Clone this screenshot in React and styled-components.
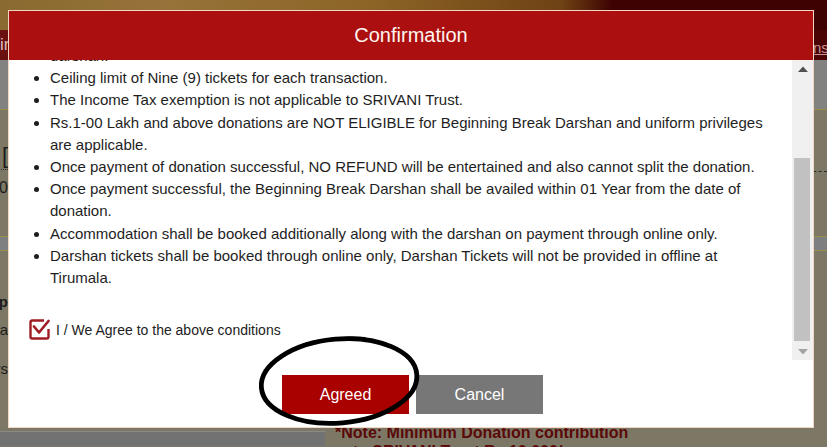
import React, { useLayoutEffect, useRef, useState } from "react";
import styled, { createGlobalStyle } from "styled-components";

const GlobalStyle = createGlobalStyle`
  html, body {
    margin: 0;
    padding: 0;
  }
  body {
    font-family: "Liberation Sans", Arial, sans-serif;
    background: #7d7866;
    overflow: hidden;
  }
`;

const Screen = styled.div`
  position: relative;
  width: 827px;
  height: 447px;
  overflow: hidden;
  display: flex;
  flex-direction: column;
  background: #7d7866;
`;

/* dimmed page behind the dialog */

const Banner = styled.div`
  height: 30px;
  flex-shrink: 0;
  background: linear-gradient(
    90deg,
    #8a6a30 0%,
    #96733a 20%,
    #8c6426 45%,
    #6e4214 68%,
    #3e0202 74%,
    #3e0202 100%
  );
`;

const NavBar = styled.div`
  height: 30px;
  flex-shrink: 0;
  display: flex;
  justify-content: space-between;
  align-items: center;
  background: linear-gradient(90deg, #6a1010 0%, #5a0a0a 60%, #4a0404 100%);
  color: #d8bcbc;
  font-size: 17px;
`;

const NavLink = styled.span`
  width: 14px;
  white-space: nowrap;
  font-size: 15px;
  color: #c89494;
  text-decoration: underline;
  padding-top: 4px;
`;

const SubBar = styled.div`
  height: 49px;
  flex-shrink: 0;
  background: #828280;
  border-bottom: 1px solid #9a8c4a;
`;

const Section = styled.div`
  height: ${(p) => p.$h}px;
  flex-shrink: 0;
  display: flex;
  justify-content: space-between;
  background: #7d7866;
`;

const Band = styled.div`
  height: 13px;
  flex-shrink: 0;
  background: #7e7f80;
  border-top: 1px solid #9a8c4a;
  border-bottom: 1px solid #9a8c4a;
`;

const Edge = styled.div`
  width: ${(p) => p.$w}px;
  overflow: hidden;
  display: flex;
  flex-direction: column;
  align-items: flex-end;
  padding-top: ${(p) => p.$top || 0}px;
`;

const Fragment = styled.div`
  white-space: nowrap;
  color: #1c1c1a;
  font-size: ${(p) => p.$size || 15}px;
  font-weight: ${(p) => (p.$bold ? 700 : 400)};
  line-height: ${(p) => p.$lh || 18}px;
  margin-top: ${(p) => p.$mt || 0}px;
  border-bottom: ${(p) => (p.$dotted ? "1px dotted #2a2a2a" : "none")};
`;

const DashLine = styled.div`
  width: 40px;
  margin-top: ${(p) => p.$mt}px;
  border-top: 1px dashed #2a2a2a;
`;

const Footer = styled.div`
  height: 23px;
  flex-shrink: 0;
  display: flex;
  background: #7d7866;
`;

const FooterBox = styled.div`
  width: 325px;
  margin-top: 8px;
  background: #727272;
  border-top: 1px solid #8a8a86;
`;

const Note = styled.div`
  padding-left: 10px;
  color: #5a0808;
  font-size: 16px;
  font-weight: 700;
  line-height: 19px;
  white-space: nowrap;
`;

/* dialog */

const Modal = styled.div`
  position: absolute;
  top: 10px;
  left: 8px;
  width: 806px;
  height: 418px;
  box-sizing: border-box;
  border: 1px solid #f2d6c4;
  background: #ffffff;
  display: flex;
  flex-direction: column;
`;

const Header = styled.div`
  height: 49px;
  flex-shrink: 0;
  display: flex;
  align-items: center;
  justify-content: center;
  background: #ab0f0f;
  color: #fff5f0;
  font-size: 20px;
`;

const ScrollRow = styled.div`
  height: 300px;
  flex-shrink: 0;
  display: flex;
`;

const ScrollArea = styled.div`
  position: relative;
  flex: 1;
  overflow: hidden;
`;

const Terms = styled.ul`
  margin: 0;
  padding: 6px 17px 0 41px;
  color: #1e1e1e;
  font-size: 15px;
  line-height: 22.2px;
`;

const AgreeRow = styled.label`
  display: flex;
  align-items: center;
  gap: 6px;
  margin-top: 30px;
  padding: 0 0 24px 20px;
  color: #222;
  font-size: 14px;
`;

const Scrollbar = styled.div`
  width: 21px;
  display: flex;
  flex-direction: column;
  background: #f0f0f0;
`;

const Arrow = styled.div`
  height: 17px;
  flex-shrink: 0;
  display: flex;
  align-items: center;
  justify-content: center;
`;

const Track = styled.div`
  position: relative;
  flex: 1;
`;

const Thumb = styled.div`
  position: absolute;
  left: 2px;
  right: 3px;
  background: #c1c1c1;
`;

const ButtonRow = styled.div`
  flex: 1;
  display: flex;
  justify-content: center;
  gap: 7px;
  padding: 15px 0 0 3px;
`;

const Button = styled.button`
  width: 127px;
  height: 39px;
  border: none;
  border-radius: 0;
  background: ${(p) => (p.$primary ? "#a90000" : "#777777")};
  color: #ffffff;
  font-family: "Liberation Sans", Arial, sans-serif;
  font-size: 16px;
  cursor: pointer;
`;

const Annotation = styled.svg`
  position: absolute;
  left: 254px;
  top: 332px;
  pointer-events: none;
`;

const CheckIcon = () => (
  <svg width="21" height="21" viewBox="0 0 21 21">
    <path
      d="M15 1.5H3.2C2.2 1.5 1.5 2.2 1.5 3.2v14.6c0 1 .7 1.7 1.7 1.7h14.6c1 0 1.7-.7 1.7-1.7V10"
      fill="none"
      stroke="#9e1c24"
      strokeWidth="2.4"
    />
    <path
      d="M5 7.5l5 6 9.5-11.5"
      fill="none"
      stroke="#9e1c24"
      strokeWidth="2.6"
      strokeLinecap="round"
      strokeLinejoin="round"
    />
  </svg>
);

const terms = [
  "Ceiling limit of Nine (9) tickets for each transaction.",
  "The Income Tax exemption is not applicable to SRIVANI Trust.",
  "Rs.1-00 Lakh and above donations are NOT ELIGIBLE for Beginning Break Darshan and uniform privileges are applicable.",
  "Once payment of donation successful, NO REFUND will be entertained and also cannot split the donation.",
  "Once payment successful, the Beginning Break Darshan shall be availed within 01 Year from the date of donation.",
  "Accommodation shall be booked additionally along with the darshan on payment through online only.",
  "Darshan tickets shall be booked through online only, Darshan Tickets will not be provided in offline at Tirumala.",
];

const App = () => {
  const areaRef = useRef(null);
  const anchorRef = useRef(null);
  const trackRef = useRef(null);
  const [thumb, setThumb] = useState({ top: 0, height: 0 });

  useLayoutEffect(() => {
    const area = areaRef.current;
    area.scrollTop = anchorRef.current.offsetTop - 7;
    const track = trackRef.current.clientHeight;
    setThumb({
      top: (area.scrollTop / area.scrollHeight) * track,
      height: (area.clientHeight / area.scrollHeight) * track,
    });
  }, []);

  return (
    <Screen>
      <GlobalStyle />
      <Banner />
      <NavBar>
        <span>ir</span>
        <NavLink>nsactions</NavLink>
      </NavBar>
      <SubBar />
      <Section $h={126}>
        <Edge $w={8} $top={32}>
          <Fragment $size={22} $lh={27} $dotted>
            Donation [
          </Fragment>
          <Fragment $size={16} $lh={20} $mt={8}>
            10,000
          </Fragment>
        </Edge>
        <Edge $w={14}>
          <DashLine $mt={61} />
        </Edge>
      </Section>
      <Band />
      <Section $h={172}>
        <Edge $w={8} $top={42}>
          <Fragment $bold>Corp</Fragment>
          <Fragment $mt={10}>Na</Fragment>
          <Fragment $mt={21}>Donors</Fragment>
        </Edge>
      </Section>
      <Footer>
        <FooterBox />
        <Note>
          *Note: Minimum Donation contribution
          <br />
          &nbsp;&nbsp;&nbsp;&nbsp;to SRIVANI Trust Rs.10,000/-
        </Note>
      </Footer>

      <Modal>
        <Header>Confirmation</Header>
        <ScrollRow>
          <ScrollArea ref={areaRef}>
            <Terms>
              <li>
                Donors who donate Rs.10,000/- and above to SRIVANI Trust are
                eligible for Beginning Break Darshan for one person along with
                the donor on payment of Rs.500/- per ticket.
              </li>
              <li>
                The donor has to produce the original ID proof furnished at the
                time of donation while reporting at the Vaikuntam Queue Complex.
              </li>
              <li>
                Donors shall report one hour before the reporting time printed
                on the ticket for availing the VIP Break darshan.
              </li>
              {terms.map((t, i) => (
                <li key={i} ref={i === 0 ? anchorRef : null}>
                  {t}
                </li>
              ))}
            </Terms>
            <AgreeRow>
              <CheckIcon />
              I / We Agree to the above conditions
            </AgreeRow>
          </ScrollArea>
          <Scrollbar>
            <Arrow>
              <svg width="10" height="6" viewBox="0 0 10 6">
                <path d="M0 6L5 0.5L10 6Z" fill="#505050" />
              </svg>
            </Arrow>
            <Track ref={trackRef}>
              <Thumb style={{ top: thumb.top, height: thumb.height }} />
            </Track>
            <Arrow>
              <svg width="10" height="6" viewBox="0 0 10 6">
                <path d="M0 0L5 5.5L10 0Z" fill="#a3a3a3" />
              </svg>
            </Arrow>
          </Scrollbar>
        </ScrollRow>
        <ButtonRow>
          <Button $primary>Agreed</Button>
          <Button>Cancel</Button>
        </ButtonRow>
      </Modal>

      <Annotation width="172" height="98" viewBox="0 0 172 98">
        <g transform="rotate(-5 85 48)">
          <ellipse
            cx="85"
            cy="49"
            rx="78"
            ry="42"
            fill="none"
            stroke="#000"
            strokeWidth="4.8"
          />
          <path
            d="M40 14C60 6 90 5 115 9"
            fill="none"
            stroke="#000"
            strokeWidth="3"
          />
        </g>
      </Annotation>
    </Screen>
  );
};

export default App;
